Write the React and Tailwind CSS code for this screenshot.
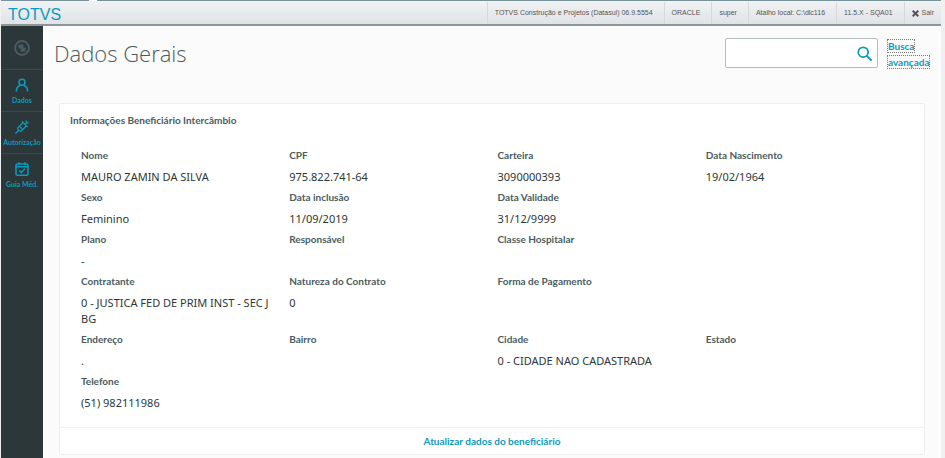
import React, { useState } from 'react';

const session = [
  'TOTVS Construção e Projetos (Datasul) 06.9.5554',
  'ORACLE',
  'super',
  'Atalho local: C:\\dlc116',
  '11.5.X - SQA01',
];

// null keeps an empty cell in the grid
const rows = [
  [
    { label: 'Nome', value: 'MAURO ZAMIN DA SILVA' },
    { label: 'CPF', value: '975.822.741-64' },
    { label: 'Carteira', value: '3090000393' },
    { label: 'Data Nascimento', value: '19/02/1964' },
  ],
  [
    { label: 'Sexo', value: 'Feminino' },
    { label: 'Data inclusão', value: '11/09/2019' },
    { label: 'Data Validade', value: '31/12/9999' },
    null,
  ],
  [
    { label: 'Plano', value: '-' },
    { label: 'Responsável', value: '' },
    { label: 'Classe Hospitalar', value: '' },
    null,
  ],
  [
    { label: 'Contratante', value: '0 - JUSTICA FED DE PRIM INST - SEC J BG' },
    { label: 'Natureza do Contrato', value: '0' },
    { label: 'Forma de Pagamento', value: '' },
    null,
  ],
  [
    { label: 'Endereço', value: '.' },
    { label: 'Bairro', value: '' },
    { label: 'Cidade', value: '0 - CIDADE NAO CADASTRADA' },
    { label: 'Estado', value: '' },
  ],
  [{ label: 'Telefone', value: '(51) 982111986' }, null, null, null],
];

const UserIcon = () => (
  <svg viewBox="0 0 14 14" className="w-3.5 h-3.5" fill="none" stroke="currentColor" strokeWidth="1.6" strokeLinecap="round">
    <circle cx="7" cy="4.3" r="3" />
    <path d="M1.4 13c.1-2.600 1.500-4.500 3.600-5.400M12.600 13c-.1-2.600-1.500-4.500-3.600-5.400" />
  </svg>
);

const SyringeIcon = () => (
  <svg viewBox="0 0 14 14" className="w-3.5 h-3.5" fill="none" stroke="currentColor" strokeWidth="1.3" strokeLinecap="round" strokeLinejoin="round">
    <path d="M.8 13.200 3.400 10.600M3.400 10.600 2.700 8l5.500-5.500 3.300 3.300L6 11.300zM7.400 1.700l4.900 4.900M10 4.200l2-2M10.900.900l2.200 2.200M5.500 7.200 6.800 8.500" />
  </svg>
);

const CalendarIcon = () => (
  <svg viewBox="0 0 14 14" className="w-3.5 h-3.5" fill="none" stroke="currentColor" strokeWidth="1.5" strokeLinecap="round" strokeLinejoin="round">
    <rect x="1" y="1.900" width="12" height="11.300" rx="1.300" />
    <path d="M1 4.800h12M4 .800v1.500M10 .800v1.500M4.600 8.800l1.800 1.800 3.200-3.500" />
  </svg>
);

const menu = [
  { label: 'Dados', icon: UserIcon },
  { label: 'Autorização', icon: SyringeIcon },
  { label: 'Guia Méd.', icon: CalendarIcon },
];

const Header = () => (
  <header>
    <div className="flex gap-2 h-px bg-white">
      <div className="w-[88px] bg-[#78929b]" />
      <div className="flex-1 bg-[#78929b]" />
    </div>
    <div className="flex items-stretch justify-between h-[25px] border-b-2 border-b-[#8c9696] bg-linear-to-b from-[#f1f2f4] to-[#dfe3e7]">
      <div className="flex items-center pl-[7px] pt-1 text-base leading-none text-[#0c9abe]">TOTVS</div>
      <div className="flex items-stretch pt-px text-[7px] text-[#555] whitespace-nowrap">
        {session.map((item) => (
          <span key={item} className="flex items-center pl-[7px] pr-[11px] border-l border-[#d5d9da]">{item}</span>
        ))}
        <button type="button" className="flex items-center gap-[3px] px-[7px] border-l border-[#d5d9da]">
          <svg viewBox="0 0 7 7" className="w-[7px] h-[7px]" stroke="currentColor" strokeWidth="2">
            <path d="M.7.7l5.600 5.600M6.300.7.7 6.300" />
          </svg>
          Sair
        </button>
      </div>
    </div>
  </header>
);

const Sidebar = () => (
  <nav className="w-[42px] shrink-0 bg-[#2c3739] text-[#0c9abe]">
    <div className="flex items-center justify-center h-[43px] text-[#4a5c60]">
      <svg viewBox="0 0 16 16" className="w-4 h-4" fill="none" stroke="currentColor">
        <circle cx="8" cy="8" r="6.900" strokeWidth="2" />
        <path d="M4.400 4.800 9.300 4.300v3.900l-4.900.2zM6.700 7.700l4.900-.2v3.900l-4.900.4z" fill="currentColor" stroke="none" />
      </svg>
    </div>
    {menu.map(({ label, icon: Icon }) => (
      <a key={label} href="#" className="flex flex-col items-center gap-1 h-[42px] pt-2 border-t border-[#3b494c] font-['Lato',sans-serif] font-bold text-[7px] leading-[8px]">
        <Icon />
        {label}
      </a>
    ))}
  </nav>
);

const Field = ({ label, value }) => (
  <div className="flex flex-col gap-[6px] pr-5">
    <dt className="font-['Lato',sans-serif] font-bold text-[10px] leading-4 text-[#4a5c60]">{label}</dt>
    <dd className="min-h-4 text-[11px] leading-4 text-[#2c3739]">{value}</dd>
  </div>
);

const App = () => {
  const [search, setSearch] = useState('');

  return (
    <div className="flex flex-col min-h-screen pl-px pr-1 bg-[#f0f0f0] font-['Liberation_Sans',Arial,sans-serif]">
      <Header />
      <div className="flex flex-1 bg-[#fbfbfb]">
        <Sidebar />
        <main className="flex-1 min-w-0 font-['Noto_Sans',sans-serif]">
          <div className="flex items-start justify-between pl-[11px] pr-3 pt-3">
            <h1 className="font-['Open_Sans',sans-serif] font-light text-[22px] leading-[30px] text-[#4a5c60]">Dados Gerais</h1>
            <form className="flex items-start" onSubmit={(e) => e.preventDefault()}>
              <div className="relative">
                <input
                  type="text"
                  aria-label="Buscar"
                  value={search}
                  onChange={(e) => setSearch(e.target.value)}
                  className="block w-[153px] h-[30px] pl-2 pr-8 text-[11px] bg-white border border-[#b6bdbf] rounded-xs"
                />
                <button type="submit" aria-label="Pesquisar" className="absolute right-[6px] top-2 text-[#0c9abe]">
                  <svg viewBox="0 0 15 15" className="w-[15px] h-[15px]" fill="none" stroke="currentColor" strokeWidth="1.800" strokeLinecap="round">
                    <circle cx="6.200" cy="6.200" r="4.900" />
                    <path d="M9.800 9.800l4.200 4.200" />
                  </svg>
                </button>
              </div>
              <div className="w-[51px] pl-[9px] font-['Lato',sans-serif] text-[10px] leading-4 font-bold">
                <a href="#" className="text-[#0c9abe] outline-none border border-dotted border-[#777] box-decoration-clone">Busca avançada</a>
              </div>
            </form>
          </div>

          <section className="ml-4 mr-4 mt-[33px] bg-white border border-[#eeeeee] rounded-xs">
            <h2 className="px-[10px] pt-2 font-['Lato',sans-serif] font-bold text-[10px] leading-4 text-[#4a5c60]">Informações Beneficiário Intercâmbio</h2>
            <dl className="grid grid-cols-4 gap-y-1 pl-[21px] pr-[10px] pt-[19px] pb-4">
              {rows.flat().map((field, i) => (field ? <Field key={i} {...field} /> : <div key={i} />))}
            </dl>
            <div className="flex justify-center border-t border-[#eeeeee]">
              <button type="button" className="h-[26px] font-['Lato',sans-serif] font-bold text-[10px] text-[#0c9abe]">Atualizar dados do beneficiário</button>
            </div>
          </section>
        </main>
      </div>
    </div>
  );
};

export default App;
